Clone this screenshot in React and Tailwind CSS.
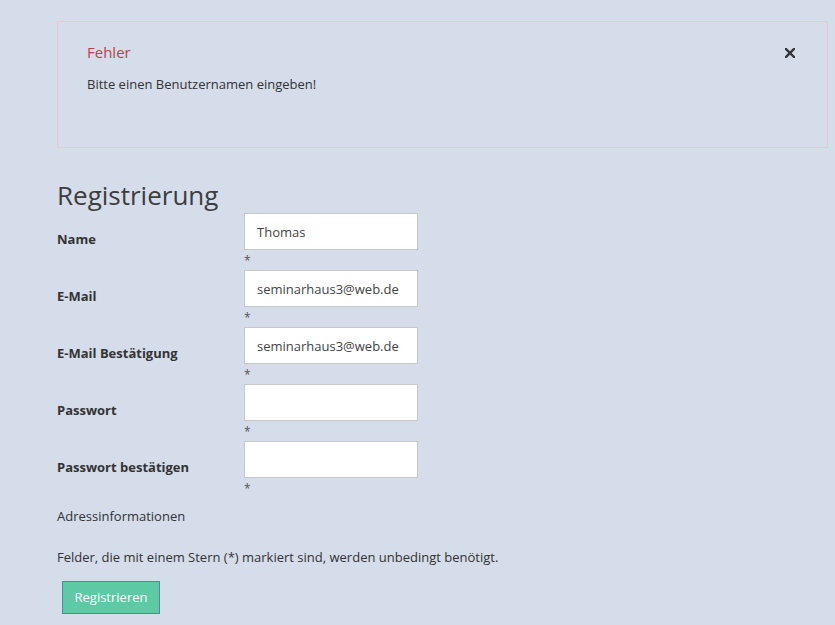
import React from "react";

const fields = [
  { label: "Name", value: "Thomas" },
  { label: "E-Mail", value: "seminarhaus3@web.de" },
  { label: "E-Mail Bestätigung", value: "seminarhaus3@web.de" },
  { label: "Passwort", value: "", type: "password" },
  { label: "Passwort bestätigen", value: "", type: "password" },
];

const App = () => {
  return (
    <div
      className="min-h-screen bg-[#d5dcea] text-[#333] text-[13px] pt-[21px] pl-[57px] pr-[8px]"
      style={{ fontFamily: '"Open Sans", "Noto Sans", sans-serif' }}
    >
      {/* Error box */}
      <div className="relative border border-[#ebc6cf] h-[127px] w-[771px] pt-[20px] pl-[29px]">
        <div className="text-[15px] text-[#b9434a] leading-[20px]">Fehler</div>
        <div className="mt-[13px] leading-[18px]">Bitte einen Benutzernamen eingeben!</div>
        <button className="absolute top-[26px] right-[32px]">
          <svg width="10" height="10" viewBox="0 0 10 10">
            <path d="M1 1 L9 9 M9 1 L1 9" stroke="#333" strokeWidth="2.4" strokeLinecap="square" />
          </svg>
        </button>
      </div>

      <h1 className="mt-[29px] text-[26px] leading-[36px] text-[#3d3d3d]">Registrierung</h1>

      <table className="border-collapse">
        <tbody>
          {fields.map((f) => (
            <tr key={f.label} className="h-[57px]">
              <td className="w-[187px] align-middle font-bold pb-[4px]">{f.label}</td>
              <td className="align-top">
                <input
                  type={f.type || "text"}
                  defaultValue={f.value}
                  className="block w-[174px] h-[37px] bg-white border border-[#c8c8c8] px-[12px] text-[13px] text-[#444] outline-none"
                />
                <div className="h-[20px] pt-[2px] leading-[18px] text-[12px] text-[#555]">*</div>
              </td>
            </tr>
          ))}
        </tbody>
      </table>

      <div className="mt-[9px] leading-[18px]">Adressinformationen</div>
      <p className="mt-[23px] leading-[18px]">
        Felder, die mit einem Stern (*) markiert sind, werden unbedingt benötigt.
      </p>
      <button className="mt-[15px] ml-[5px] w-[98px] h-[33px] bg-[#5ec9a5] border border-[#4a8ca4] text-white text-[13px]">
        Registrieren
      </button>
    </div>
  );
};

export default App;
